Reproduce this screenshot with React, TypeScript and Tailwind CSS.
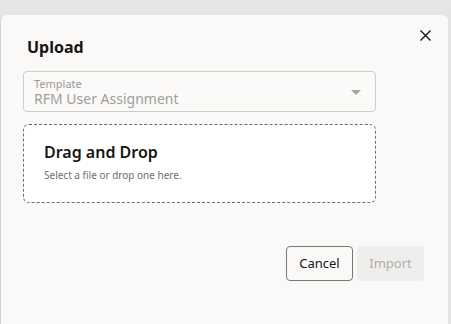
import React from "react";

export default function App() {
  return (
    <div
      className="w-[451px] h-[324px] bg-[#e4e3e1] flex flex-col overflow-hidden"
      style={{ fontFamily: '"Noto Sans", "Open Sans", sans-serif' }}
    >
      <div className="h-[15px] shrink-0 bg-[#e6e5e3]" />
      <div className="flex-1 ml-0 mr-[3px] bg-[#faf9f8] border-l border-[#d6d5d3] rounded-tl-[6px] rounded-tr-[6px] relative flex flex-col">
        <button className="absolute right-[16px] top-[13px] w-[14px] h-[14px] flex items-center justify-center text-[#161513]">
          <svg width="11" height="11" viewBox="0 0 11 11" fill="none" stroke="currentColor" strokeWidth="1.4">
            <path d="M0.5 0.5 L10.5 10.5 M10.5 0.5 L0.5 10.5" />
          </svg>
        </button>
        <div className="pl-[26px] pt-[22px] text-[16px] font-bold text-[#161513] leading-[20px]">Upload</div>
        <div className="ml-[22px] mt-[14px] w-[353px] h-[41px] border border-[#cfcdca] rounded-[4px] bg-[#fbfaf9] flex items-center pl-[10px] pr-[14px]">
          <div className="flex-1 flex flex-col">
            <span className="text-[11px] leading-[14px] text-[#9a9896]">Template</span>
            <span className="text-[14px] leading-[16px] text-[#a09e9b]">RFM User Assignment</span>
          </div>
          <svg width="10" height="6" viewBox="0 0 10 6" className="mt-[2px]">
            <path d="M0 0 L10 0 L5 5 Z" fill="#a7a5a2" />
          </svg>
        </div>
        <div className="ml-[22px] mt-[12px] w-[353px] h-[79px] border border-dashed border-[#6f6d6a] rounded-[6px] bg-white pl-[20px] pt-[16px]">
          <div className="text-[16px] font-semibold leading-[22px] text-[#161513]">Drag and Drop</div>
          <div className="text-[10px] leading-[14px] text-[#6f6d6a] mt-[5px]">Select a file or drop one here.</div>
        </div>
        <div className="flex justify-end gap-[4px] mt-[43px] pr-[24px]">
          <button className="w-[67px] h-[35px] border border-[#7a7875] rounded-[4px] text-[13px] text-[#161513]">
            Cancel
          </button>
          <button className="w-[67px] h-[35px] rounded-[4px] bg-[#efeeec] text-[13px] text-[#b1afac]">
            Import
          </button>
        </div>
      </div>
    </div>
  );
}
